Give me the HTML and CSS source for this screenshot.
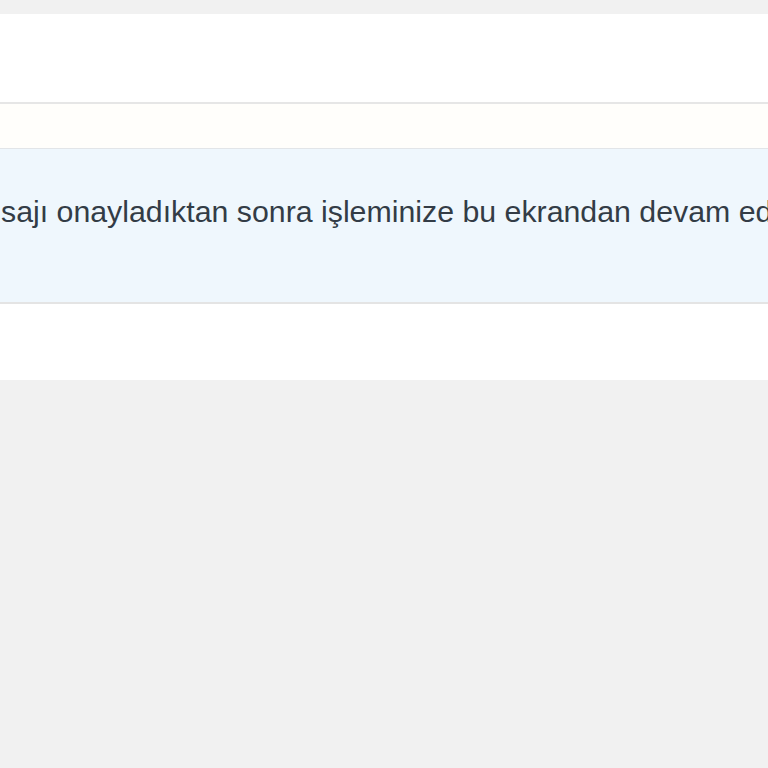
FILE: index.html
```html
<!DOCTYPE html>
<html lang="tr">
<head>
<meta charset="utf-8">
<title>Onay</title>
<link rel="stylesheet" href="styles.css">
</head>
<body>
<div class="page">
  <div class="panel">
    <div class="panel-header"></div>
    <div class="panel-sub"></div>
    <div class="info">
      <p class="info-text">sajı onayladıktan sonra işleminize bu ekrandan devam edebilirsiniz.</p>
    </div>
    <div class="panel-footer"></div>
  </div>
</div>
</body>
</html>
```
FILE: styles.css
```css
html, body {
  margin: 0;
  padding: 0;
  background: #f1f1f1;
  font-family: "Liberation Sans", Arial, sans-serif;
}
.page {
  padding-top: 14px;
  overflow: hidden;
}
.panel {
  background: #ffffff;
}
.panel-header {
  height: 88px;
  border-bottom: 2px solid #e6e6e6;
}
.panel-sub {
  height: 44px;
  background: #fffefb;
  border-bottom: 1px solid #e2e5e8;
}
.info {
  height: 153px;
  background: #eff7fd;
  border-bottom: 2px solid #e4e4e4;
  overflow: hidden;
}
.info-text {
  margin: 0;
  padding-top: 47px;
  padding-left: 1px;
  white-space: nowrap;
  font-size: 30.3px;
  line-height: 31px;
  color: #333c46;
}
.panel-footer {
  height: 76px;
}
```
